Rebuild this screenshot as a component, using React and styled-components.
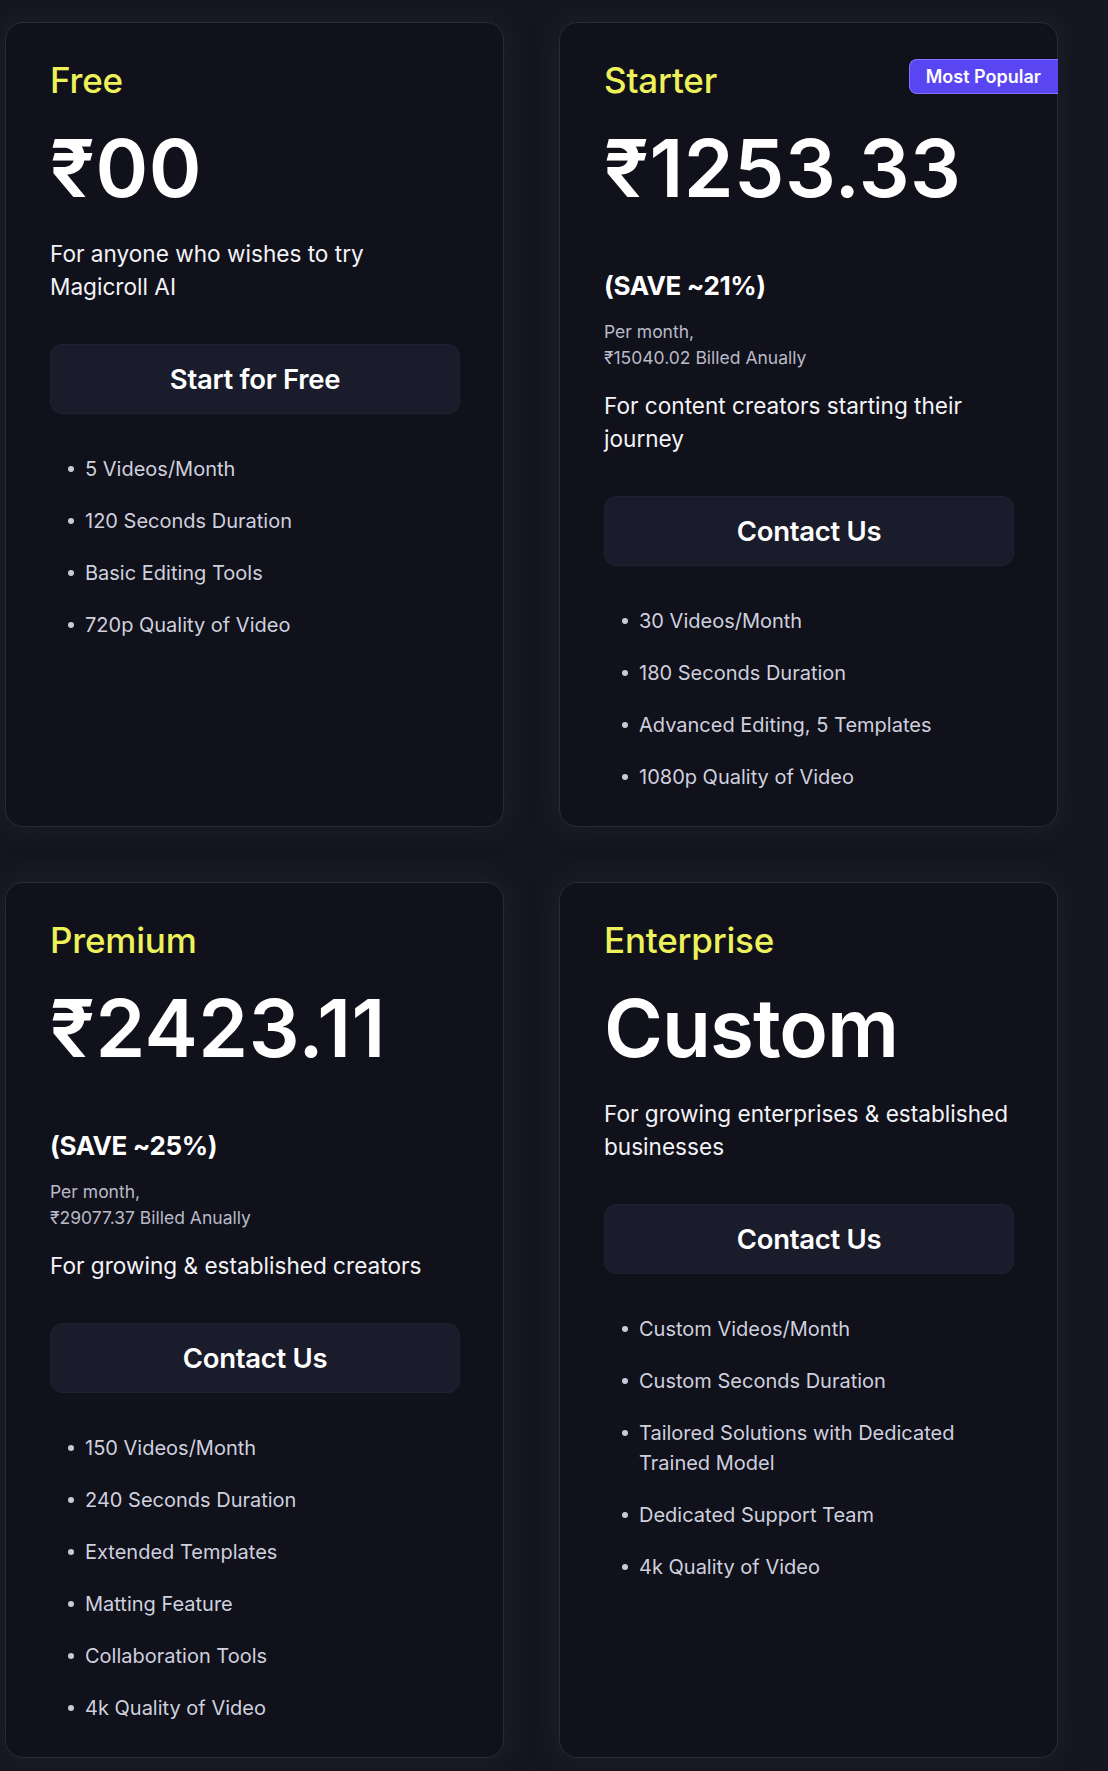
import React from "react";
import styled, { createGlobalStyle } from "styled-components";

const GlobalStyle = createGlobalStyle`
  * { box-sizing: border-box; }
  body {
    margin: 0;
    background: #15161f;
    font-family: "Inter", "Noto Sans", "DejaVu Sans", sans-serif;
    -webkit-font-smoothing: antialiased;
  }
`;

const Grid = styled.div`
  display: grid;
  grid-template-columns: 499px 499px;
  column-gap: 55px;
  row-gap: 55px;
  padding: 22px 0 14px 5px;
`;

const Card = styled.div`
  position: relative;
  display: flex;
  flex-direction: column;
  background: #10111b;
  border: 1px solid #2a2b39;
  border-radius: 18px;
  padding: 37px 43px 34px 44px;
  box-shadow: 0 0 22px 6px rgba(30, 31, 44, 0.7);
`;

const Badge = styled.div`
  position: absolute;
  top: 36px;
  right: -1px;
  height: 35px;
  display: flex;
  align-items: center;
  padding: 0 17px 0 16px;
  background: #5a45f3;
  border: 1px solid #8173ff;
  border-right: none;
  border-radius: 8px 0 0 8px;
  color: #ffffff;
  font-size: 18px;
  font-weight: 600;
`;

const PlanName = styled.h3`
  margin: 0;
  font-size: 35px;
  line-height: 40px;
  font-weight: 500;
  color: #eef25a;
  letter-spacing: -0.2px;
`;

const Price = styled.div`
  margin-top: 20px;
  font-size: 80px;
  line-height: 96px;
  font-weight: 600;
  color: #ffffff;
  letter-spacing: ${({ $word }) => ($word ? "-1px" : "0.5px")};
`;

const Save = styled.div`
  margin-top: 53px;
  font-size: 26px;
  line-height: 34px;
  font-weight: 700;
  color: #ffffff;
  letter-spacing: -0.4px;
`;

const Billing = styled.div`
  margin-top: 16px;
  font-size: 17.5px;
  line-height: 26px;
  color: #b9bac8;
`;

const Description = styled.p`
  margin: ${({ $afterBilling }) => ($afterBilling ? "18px" : "21px")} 0 0;
  max-width: ${({ $maxWidth }) => $maxWidth || "100%"};
  font-size: 22.6px;
  line-height: 33px;
  color: #f3f3f7;
`;

const ActionButton = styled.button`
  margin-top: 41px;
  height: 70px;
  width: 100%;
  border: 1px solid #1f2132;
  border-radius: 12px;
  background: #1a1c2b;
  color: #ffffff;
  font-family: inherit;
  font-size: 27.5px;
  font-weight: 600;
  letter-spacing: -0.3px;
  cursor: pointer;
`;

const Features = styled.ul`
  list-style: none;
  margin: 40px 0 0;
  padding: 0;
  display: flex;
  flex-direction: column;
  gap: 22px;
`;

const Feature = styled.li`
  display: flex;
  align-items: flex-start;
  font-size: 20px;
  line-height: 30px;
  color: #cfd0de;
  padding-right: 20px;
`;

const Dot = styled.span`
  flex: none;
  width: 6px;
  height: 6px;
  border-radius: 50%;
  background: #c9cadb;
  margin: 12px 11px 0 18px;
`;

const plans = [
  {
    name: "Free",
    price: "₹00",
    desc: "For anyone who wishes to try Magicroll AI",
    descWidth: "390px",
    action: "Start for Free",
    features: ["5 Videos/Month", "120 Seconds Duration", "Basic Editing Tools", "720p Quality of Video"],
  },
  {
    name: "Starter",
    price: "₹1253.33",
    popular: true,
    save: "(SAVE ~21%)",
    billed: "₹15040.02 Billed Anually",
    desc: "For content creators starting their journey",
    action: "Contact Us",
    features: ["30 Videos/Month", "180 Seconds Duration", "Advanced Editing, 5 Templates", "1080p Quality of Video"],
  },
  {
    name: "Premium",
    price: "₹2423.11",
    save: "(SAVE ~25%)",
    billed: "₹29077.37 Billed Anually",
    desc: "For growing & established creators",
    action: "Contact Us",
    features: [
      "150 Videos/Month",
      "240 Seconds Duration",
      "Extended Templates",
      "Matting Feature",
      "Collaboration Tools",
      "4k Quality of Video",
    ],
  },
  {
    name: "Enterprise",
    price: "Custom",
    word: true,
    desc: "For growing enterprises & established businesses",
    action: "Contact Us",
    features: [
      "Custom Videos/Month",
      "Custom Seconds Duration",
      "Tailored Solutions with Dedicated Trained Model",
      "Dedicated Support Team",
      "4k Quality of Video",
    ],
  },
];

function PlanCard({ plan }) {
  return (
    <Card>
      {plan.popular && <Badge>Most Popular</Badge>}
      <PlanName>{plan.name}</PlanName>
      <Price $word={plan.word}>{plan.price}</Price>
      {plan.save && <Save>{plan.save}</Save>}
      {plan.billed && (
        <Billing>
          Per month,
          <br />
          {plan.billed}
        </Billing>
      )}
      <Description $afterBilling={!!plan.billed} $maxWidth={plan.descWidth}>
        {plan.desc}
      </Description>
      <ActionButton>{plan.action}</ActionButton>
      <Features>
        {plan.features.map((f) => (
          <Feature key={f}>
            <Dot />
            <span>{f}</span>
          </Feature>
        ))}
      </Features>
    </Card>
  );
}

export default function App() {
  return (
    <>
      <GlobalStyle />
      <Grid>
        {plans.map((p) => (
          <PlanCard key={p.name} plan={p} />
        ))}
      </Grid>
    </>
  );
}
